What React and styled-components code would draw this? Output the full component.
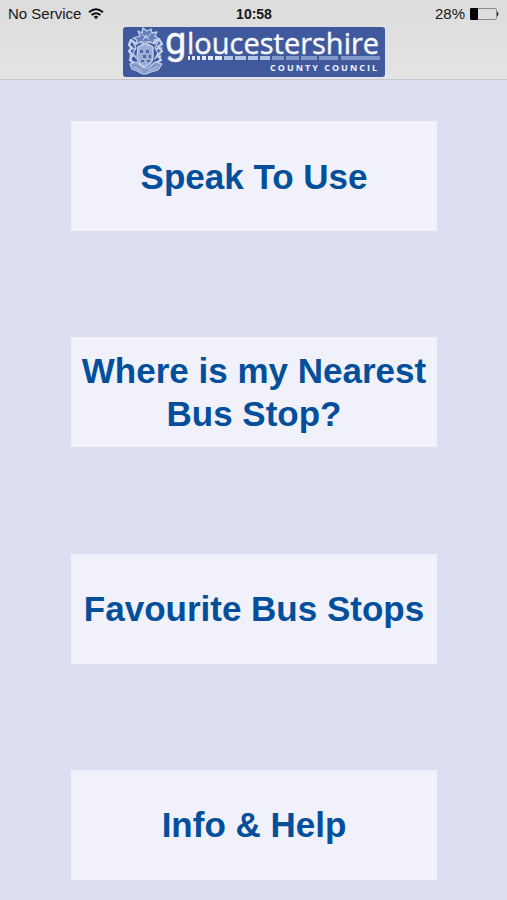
import React from 'react';
import styled, { createGlobalStyle } from 'styled-components';

const GlobalStyle = createGlobalStyle`
  * { box-sizing: border-box; }
  body {
    margin: 0;
    background: #dcdff1;
    font-family: "Liberation Sans", Arial, Helvetica, sans-serif;
  }
`;

const Screen = styled.div`
  min-height: 100vh;
  display: flex;
  flex-direction: column;
`;

const Header = styled.header`
  background: linear-gradient(#dcdcdc, #e4e4e4);
  border-bottom: 1px solid #c5c6d2;
`;

const StatusBar = styled.div`
  display: grid;
  grid-template-columns: 1fr auto 1fr;
  align-items: center;
  height: 27px;
  padding: 0 7px 0 8px;
  font-size: 15px;
  color: #161616;
`;

const StatusGroup = styled.div`
  display: flex;
  align-items: center;
  gap: ${({ $gap }) => $gap}px;
  justify-content: ${({ $end }) => ($end ? 'flex-end' : 'flex-start')};
`;

const Clock = styled.time`
  font-weight: 700;
  font-size: 14px;
`;

const Brand = styled.div`
  display: flex;
  justify-content: center;
  height: 52px;
`;

const LogoSvg = styled.svg`
  display: block;
  width: 262px;
  height: 50px;
  overflow: visible;
`;

const LogoName = styled.text`
  font-family: "Open Sans", sans-serif;
  font-size: 29px;
  fill: #f7f9ff;
  stroke: #f7f9ff;
  stroke-width: 0.4;
`;

const LogoInitial = styled.tspan`
  font-family: Roboto, sans-serif;
  font-size: 38px;
`;

const LogoSubtitle = styled.text`
  font-family: "Open Sans", sans-serif;
  font-size: 9px;
  font-weight: 700;
  letter-spacing: 2px;
  fill: #eef2ff;
`;

const Menu = styled.nav`
  flex: 1;
  display: flex;
  flex-direction: column;
  justify-content: space-between;
  padding: 41px 70px 20px 71px;
  gap: 20px;
`;

const MenuButton = styled.button`
  min-height: 110px;
  width: 100%;
  padding: 0 4px;
  border: 0;
  background: #f0f1fa;
  color: #034f9b;
  font-family: inherit;
  font-size: 35px;
  font-weight: 700;
  line-height: 43px;
  cursor: pointer;
`;

const WifiIcon = () => (
  <svg width="16" height="12" viewBox="0 0 16 12" fill="none" stroke="#111" strokeWidth="2" aria-label="Wi-Fi">
    <path d="M1 4.3Q8-1.8 15 4.3" />
    <path d="M3.6 7.1Q8 3.3 12.4 7.1" />
    <path d="M5.6 8.7Q8 6.7 10.4 8.7L8 11.3Z" fill="#111" stroke="none" />
  </svg>
);

const BatteryIcon = () => (
  <svg width="30" height="12" viewBox="0 0 30 12" aria-label="Battery">
    <rect x="0.5" y="0.5" width="26" height="11" rx="1.5" fill="none" stroke="#8a8a8a" />
    <rect x="0" y="0" width="8" height="12" rx="1" fill="#050505" />
    <path d="M27 3.5Q30 6 27 8.5Z" fill="#222" />
  </svg>
);

const bars = [
  [65, 2], [69, 3], [74, 3], [79, 4], [85, 5], [92, 7], [101, 9], [112, 11], [125, 10],
  [137, 10], [149, 12], [163, 13], [178, 16], [196, 19], [218, 39],
];

const barColor = (i) => {
  if (i < 6) return '#e3e9f7';
  return i < 10 ? '#b5c4e3' : '#8198c9';
};

const Logo = () => (
  <LogoSvg viewBox="0 0 262 50" role="img" aria-label="Gloucestershire County Council">
    <rect width="262" height="50" rx="3" fill="#40599d" />
    <g fill="none" stroke="#c3d0ea" strokeLinecap="round" strokeLinejoin="round">
      <path d="M17 9l-2-5 4 2 1-5 4 3 4-2 1 4 5-1-2 4 4 3-5 1 1 4-6-2-4 3-4-3-5 2 1-4-4-2z" fill="#6580ba" strokeWidth="1.3" />
      <path d="M19 7l4 4 5-4M20 13l3-5 3 5M17 15h12" strokeWidth="1" />
      <path d="M15 20Q22 14 30 20V31Q29 37 22 40Q15 37 14 31Z" fill="#9aaed7" strokeWidth="1.4" />
      <path d="M17 23h3v3h-3zM23 23h3v3h-3zM20 28h3v3h-3zM26 28h2v3h-2zM18 33h3v2h-3zM24 33h3v2h-3z" fill="#4d67a8" stroke="none" />
      <path d="M13 17L8 13 6 18 9 21 6 24 9 28 7 33 11 36M31 16l5-4 3 5-4 3 4 4-4 4 3 5-5 3" strokeWidth="2.4" />
      <path d="M11 17l2 4-3 5 3 5M35 15l-3 6 3 5-3 6M7 21l5 1M33 22l6-1M7 29l5 0M33 30l5-1" strokeWidth="1.4" />
      <path d="M7 37l6-2 8 6h4l7-6 7 2-4 6-7 2-5 2h-3l-6-3-5-2z" fill="#839ac9" strokeWidth="1.2" />
      <path d="M11 40l8 4M34 40l-9 4" strokeWidth="1" />
    </g>
    <LogoName y="27"><LogoInitial x="42">g</LogoInitial><tspan x="64">loucestershire</tspan></LogoName>
    {bars.map(([x, w], i) => (
      <rect key={x} x={x} y="29" width={w} height="4" fill={barColor(i)} />
    ))}
    <LogoSubtitle x="147" y="44">COUNTY COUNCIL</LogoSubtitle>
  </LogoSvg>
);

const items = ['Speak To Use', 'Where is my Nearest Bus Stop?', 'Favourite Bus Stops', 'Info & Help'];

export default function App() {
  return (
    <Screen>
      <GlobalStyle />
      <Header>
        <StatusBar>
          <StatusGroup $gap={7}><span>No Service</span><WifiIcon /></StatusGroup>
          <Clock>10:58</Clock>
          <StatusGroup $gap={5} $end><span>28%</span><BatteryIcon /></StatusGroup>
        </StatusBar>
        <Brand><Logo /></Brand>
      </Header>
      <Menu>
        {items.map((label) => <MenuButton key={label} type="button">{label}</MenuButton>)}
      </Menu>
    </Screen>
  );
}
